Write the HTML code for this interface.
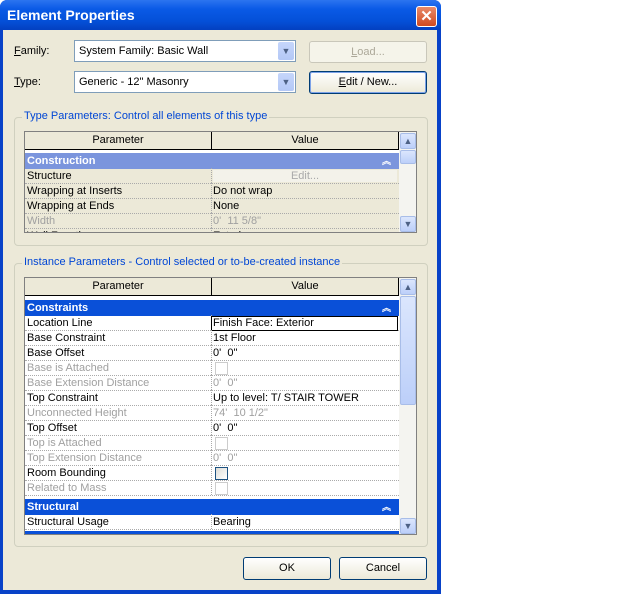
<!DOCTYPE html><html><head><style>
*{box-sizing:border-box;margin:0;padding:0}
body{width:640px;height:594px;background:#fff;font-family:Tahoma,"Liberation Sans",sans-serif;font-size:11px;position:relative;overflow:hidden}
.dlg{position:absolute;left:0;top:0;width:441px;height:594px;background:#0842c8;border-radius:7px 7px 0 0}
.tb{position:absolute;left:0;top:0;width:441px;height:30px;border-radius:7px 7px 0 0;background:linear-gradient(#2c74f0,#0a5ae6 30%,#0450d8 70%,#0340c0)}
.tt{position:absolute;left:7px;top:7px;color:#fff;font-weight:bold;font-size:14px}
.x{position:absolute;left:416px;top:6px;width:21px;height:21px;border:1px solid #fff;border-radius:3px;background:linear-gradient(#e88a6a,#d04a20);color:#fff;font-size:15px;font-weight:bold;text-align:center;line-height:19px}
.body{position:absolute;left:3px;top:30px;width:434px;height:560px;background:#ece9d8}
.lbl{position:absolute;font-size:11px}
.combo{position:absolute;background:#fff;border:1px solid #7f9db9;height:22px;padding:4px 4px 2px}
.arr{position:absolute;right:1px;top:1px;width:16px;height:18px;background:linear-gradient(#c6d6fb,#b4c8f6);border-radius:2px;color:#4d6185;font-size:9px;text-align:center;line-height:18px}
.btn{position:absolute;border:1px solid #003c74;border-radius:3px;background:linear-gradient(#fff,#ece9d8);text-align:center;line-height:20px}
.grp{position:absolute;border:1px solid #d0d0bf;border-radius:4px}
.leg{position:absolute;background:#ece9d8;color:#0046d5;padding:0 2px}
.grid{position:absolute;background:#fff;border:1px solid #808080;overflow:hidden}
.hd{position:absolute;top:0;height:18px;border-right:1px solid #000;border-bottom:1px solid #000;background:#ece9d8;text-align:center;line-height:17px}
.row{position:absolute;left:0;width:374px;height:15px;border-bottom:1px dotted #aaa;line-height:15px}
.row span{position:absolute;left:2px}
.row b{position:absolute;left:188px;font-weight:normal}
.row i{position:absolute;left:186px;top:-1px;bottom:0;border-left:1px dotted #aaa}
.g{color:#a0a0a0}
.cat{position:absolute;left:0;width:374px;height:16px;color:#fff;font-weight:bold;padding-left:2px;line-height:16px}
.cat em{position:absolute;right:8px;font-style:normal;font-size:9px}
.sb{position:absolute;right:0;top:0;width:17px;bottom:0;background:#f4f4f0}
.sbb{position:absolute;left:1px;width:16px;height:16px;background:linear-gradient(#dbe6fd,#bccff9);border:1px solid #a8bde8;border-radius:2px;color:#4d6185;font-size:9px;text-align:center;line-height:14px}
.cb{position:absolute;left:190px;top:1px;width:13px;height:13px;border:1px solid #ccc}
</style></head><body>
<div class="dlg"></div>
<div class="tb"><div class="tt">Element Properties</div><div class="x">✕</div></div>
<div class="body"></div>
<div class="lbl" style="left:14px;top:45px"><u>F</u>amily:</div>
<div class="combo" style="left:74px;top:40px;width:222px">System Family: Basic Wall<div class="arr">▼</div></div>
<div class="btn" style="left:309px;top:41px;width:118px;height:22px;border-color:#c9c7ba;color:#aca899;background:#f5f4ea"><u>L</u>oad...</div>
<div class="lbl" style="left:14px;top:76px"><u>T</u>ype:</div>
<div class="combo" style="left:74px;top:71px;width:222px">Generic - 12" Masonry<div class="arr">▼</div></div>
<div class="btn" style="left:309px;top:71px;width:118px;height:23px;box-shadow:inset 0 0 0 1px #7ca2e8"><u>E</u>dit / New...</div>

<div class="grp" style="left:14px;top:117px;width:414px;height:129px"></div>
<div class="leg" style="left:22px;top:110px">Type Parameters: Control all elements of this type</div>
<div class="grid" style="left:24px;top:131px;width:393px;height:102px">
<div class="hd" style="left:0;width:187px">Parameter</div><div class="hd" style="left:187px;width:187px">Value</div>
<div class="cat" style="top:21px;background:#7b95dd">Construction<em>︽</em></div>
<div class="row" style="top:37px;background:#ece9d8"><span>Structure</span><i></i><b style="left:188px;width:184px;top:1px;height:12px;background:#f3f2ea;text-align:center;color:#aaa;line-height:12px">Edit...</b></div>
<div class="row" style="top:52px;background:#ece9d8"><span>Wrapping at Inserts</span><i></i><b>Do not wrap</b></div>
<div class="row" style="top:67px;background:#ece9d8"><span>Wrapping at Ends</span><i></i><b>None</b></div>
<div class="row g" style="top:82px;background:#ece9d8"><span>Width</span><i></i><b>0'&nbsp; 11 5/8"</b></div>
<div class="row" style="top:97px;background:#ece9d8"><span>Wall Function</span><i></i><b>Exterior</b></div>
<div class="sb"><div class="sbb" style="top:1px">▲</div><div class="sbb" style="top:18px;height:14px"></div><div class="sbb" style="top:84px">▼</div></div>
</div>

<div class="grp" style="left:14px;top:263px;width:414px;height:284px"></div>
<div class="leg" style="left:22px;top:256px">Instance Parameters - Control selected or to-be-created instance</div>
<div class="grid" style="left:24px;top:277px;width:393px;height:258px">
<div class="hd" style="left:0;width:187px">Parameter</div><div class="hd" style="left:187px;width:187px">Value</div>
<div class="cat" style="top:22px;background:#0a50d8">Constraints<em>︽</em></div>
<div class="row" style="top:38px"><span>Location Line</span><i></i><b style="left:186px;width:187px;height:15px;border:1px solid #000;padding-left:1px;line-height:13px">Finish Face: Exterior</b></div>
<div class="row" style="top:53px"><span>Base Constraint</span><i></i><b>1st Floor</b></div>
<div class="row" style="top:68px"><span>Base Offset</span><i></i><b>0'&nbsp; 0"</b></div>
<div class="row g" style="top:83px"><span>Base is Attached</span><i></i><div class="cb"></div></div>
<div class="row g" style="top:98px"><span>Base Extension Distance</span><i></i><b>0'&nbsp; 0"</b></div>
<div class="row" style="top:113px"><span>Top Constraint</span><i></i><b>Up to level: T/ STAIR TOWER</b></div>
<div class="row g" style="top:128px"><span>Unconnected Height</span><i></i><b>74'&nbsp; 10 1/2"</b></div>
<div class="row" style="top:143px"><span>Top Offset</span><i></i><b>0'&nbsp; 0"</b></div>
<div class="row g" style="top:158px"><span>Top is Attached</span><i></i><div class="cb"></div></div>
<div class="row g" style="top:173px"><span>Top Extension Distance</span><i></i><b>0'&nbsp; 0"</b></div>
<div class="row" style="top:188px"><span>Room Bounding</span><i></i><div class="cb" style="border-color:#1c5180;background:linear-gradient(135deg,#dcdcd7,#fff)"></div></div>
<div class="row g" style="top:203px"><span>Related to Mass</span><i></i><div class="cb"></div></div>
<div class="cat" style="top:221px;background:#0a50d8">Structural<em>︽</em></div>
<div class="row" style="top:237px"><span>Structural Usage</span><i></i><b>Bearing</b></div>
<div class="cat" style="top:253px;background:#0a50d8"></div>
<div class="sb"><div class="sbb" style="top:1px">▲</div><div class="sbb" style="top:18px;height:109px"></div><div class="sbb" style="top:240px">▼</div></div>
</div>

<div class="btn" style="left:243px;top:557px;width:88px;height:23px">OK</div>
<div class="btn" style="left:339px;top:557px;width:88px;height:23px">Cancel</div>
</body></html>
